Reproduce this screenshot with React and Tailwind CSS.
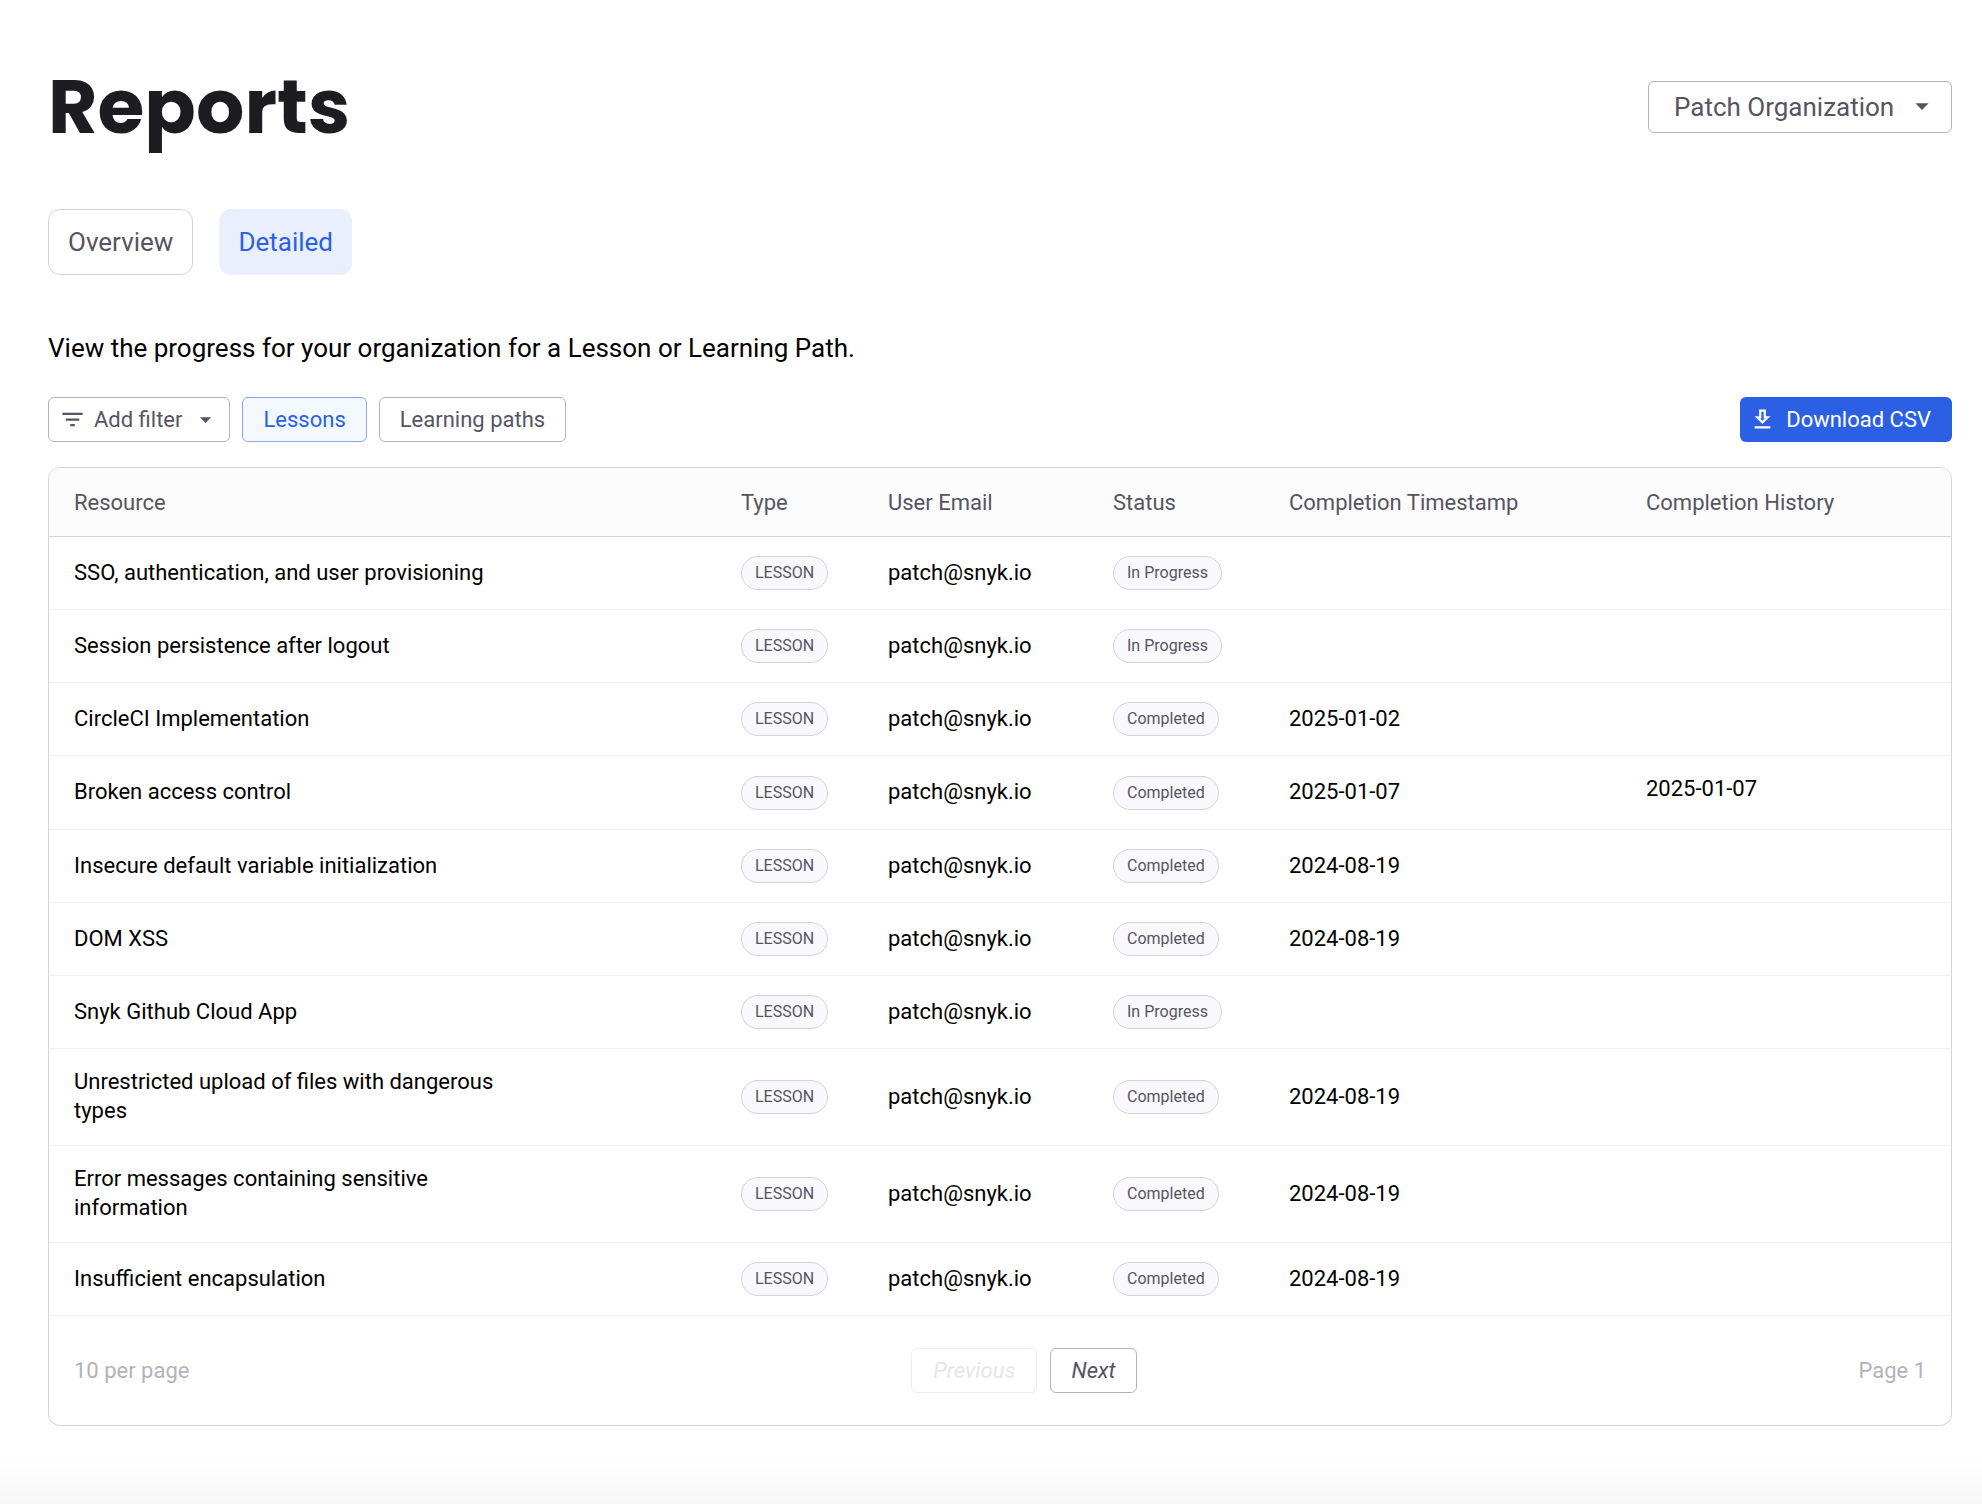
import React from "react";

const rows = [
  { name: "SSO, authentication, and user provisioning", status: "In Progress" },
  { name: "Session persistence after logout", status: "In Progress" },
  { name: "CircleCI Implementation", status: "Completed", date: "2025-01-02" },
  { name: "Broken access control", status: "Completed", date: "2025-01-07", history: "2025-01-07" },
  { name: "Insecure default variable initialization", status: "Completed", date: "2024-08-19" },
  { name: "DOM XSS", status: "Completed", date: "2024-08-19" },
  { name: "Snyk Github Cloud App", status: "In Progress" },
  { name: "Unrestricted upload of files with dangerous types", status: "Completed", date: "2024-08-19" },
  { name: "Error messages containing sensitive information", status: "Completed", date: "2024-08-19" },
  { name: "Insufficient encapsulation", status: "Completed", date: "2024-08-19" },
];

function Icon({ d, className }) {
  return (
    <svg viewBox="0 0 24 24" fill="currentColor" aria-hidden="true" className={className}>
      <path d={d} />
    </svg>
  );
}

const CARET = "M7 10l5 5 5-5z";
const FILTER = "M10 18h4v-2h-4v2zM3 6v2h18V6H3zm3 7h12v-2H6v2z";
const DOWNLOAD =
  "M13 5v6h1.17L12 13.17 9.83 11H11V5h2m2-2H9v6H5l7 7 7-7h-4V3m4 15H5v2h14v-2z";

function Chip({ children }) {
  return (
    <span className="flex h-[34px] w-fit items-center whitespace-nowrap rounded-full border border-[#d3d3d9] bg-[#f9f8fc] px-[13px] text-base text-[#555463]">
      {children}
    </span>
  );
}

function Th({ children, className = "" }) {
  return <th scope="col" className={`h-[69px] border-b border-[#d3d3d9] pl-[25px] font-normal ${className}`}>{children}</th>;
}

const textCell = "border-b border-[#f0f0f2] pb-5 pl-[25px] pt-[18px]";
const chipCell = "border-b border-[#f0f0f2] py-[19px] pl-[25px]";

export default function App() {
  return (
    <div className="flex min-h-screen flex-col bg-white font-['Roboto',sans-serif] text-black">
      <main className="pl-12 pr-[30px] pt-[58px]">
        <header className="flex items-start justify-between">
          <h1 className="font-['Poppins','Inter',sans-serif] text-[76px] font-bold leading-[98px] text-[#1c1c21]">Reports</h1>
          <div className="relative mt-[23px]">
            <select
              aria-label="Organization"
              className="h-[52px] appearance-none rounded-md border border-[#b3b2bd] bg-white pl-[25px] pr-14 text-[26px] leading-8 text-[#555463]"
            >
              <option>Patch Organization</option>
            </select>
            <Icon d={CARET} className="pointer-events-none absolute right-[14px] top-[9px] size-8 text-[#555463]" />
          </div>
        </header>

        <nav className="mt-[53px] flex gap-[26px] text-[26px] leading-8">
          <button className="h-[66px] rounded-xl border border-[#d3d3d9] px-[19px] text-[#555463]">Overview</button>
          <button className="h-[66px] rounded-xl bg-[#e9effd] px-[19px] text-[#2b60e4]">Detailed</button>
        </nav>

        <p className="mt-[57px] text-[26px] leading-8">View the progress for your organization for a Lesson or Learning Path.</p>

        <div className="mt-[33px] flex items-center justify-between text-[22px] leading-7">
          <div className="flex items-center gap-3">
            <button className="flex h-[45px] items-center rounded-md border border-[#b3b2bd] px-[10px] text-[#555463]">
              <Icon d={FILTER} className="mr-2 size-[27px]" />
              Add filter
              <Icon d={CARET} className="ml-[10px] size-[27px]" />
            </button>
            <button className="h-[45px] rounded-md border border-[#86a8f5] bg-[#f4f8ff] px-5 text-[#2b60e4]">Lessons</button>
            <button className="h-[45px] rounded-md border border-[#b3b2bd] px-5 text-[#555463]">Learning paths</button>
          </div>
          <button className="flex h-[45px] items-center rounded-md bg-[#2b60e4] pl-[9px] pr-[21px] text-white">
            <Icon d={DOWNLOAD} className="mr-[10px] size-[27px]" />
            Download CSV
          </button>
        </div>

        <section className="mt-[25px] overflow-hidden rounded-xl border border-[#d3d3d9]">
          <table className="w-full table-fixed border-separate border-spacing-0 text-left text-[22px] leading-[29px]">
            <thead className="bg-[#fcfcfc] text-[#555463]">
              <tr>
                <Th>Resource</Th>
                <Th className="w-[147px]">Type</Th>
                <Th className="w-[225px]">User Email</Th>
                <Th className="w-[176px]">Status</Th>
                <Th className="w-[357px]">Completion Timestamp</Th>
                <Th className="w-[330px]">Completion History</Th>
              </tr>
            </thead>
            <tbody>
              {rows.map((r) => (
                <tr key={r.name}>
                  <td className={textCell}><div className="max-w-[440px]">{r.name}</div></td>
                  <td className={chipCell}><Chip>LESSON</Chip></td>
                  <td className={textCell}>patch@snyk.io</td>
                  <td className={chipCell}><Chip>{r.status}</Chip></td>
                  <td className={textCell}>{r.date}</td>
                  <td className={textCell}>{r.history && <div className="pb-[6px]">{r.history}</div>}</td>
                </tr>
              ))}
            </tbody>
          </table>
          <footer className="flex h-[109px] items-center justify-between px-[25px] text-[22px] leading-7 text-[#b3b2bd]">
            <span>10 per page</span>
            <div className="flex gap-[13px] italic">
              <button disabled className="h-[45px] rounded-md border border-[#ededf0] px-[21px] text-[#e6e6e9]">Previous</button>
              <button className="h-[45px] rounded-md border border-[#b3b2bd] px-5 text-[#555463]">Next</button>
            </div>
            <span>Page 1</span>
          </footer>
        </section>
      </main>
      <div className="mt-auto h-12 bg-linear-to-b from-white to-[#f7f7f7]" />
    </div>
  );
}
